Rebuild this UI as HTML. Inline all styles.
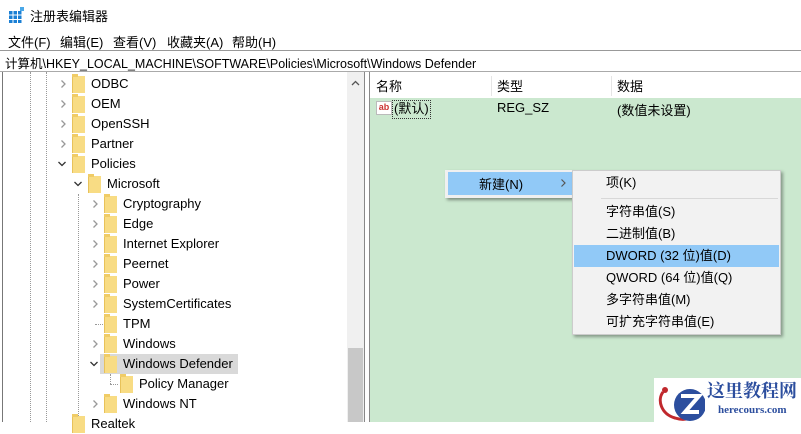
<!DOCTYPE html>
<html><head><meta charset="utf-8"><style>
*{margin:0;padding:0;box-sizing:border-box}
body{width:801px;height:422px;overflow:hidden;background:#fff;font-family:"Liberation Sans","Noto Sans CJK SC",sans-serif;font-size:13px;color:#000;position:relative}
.abs{position:absolute}
.row{position:absolute;height:20px;line-height:20px;white-space:nowrap}
.fold{position:absolute;width:13px;height:17px;background:#f8dc84;border-left:1px solid #e8c25a;top:2px}
.fold:before{content:"";position:absolute;left:-1px;top:-2px;width:6px;height:3px;background:#f0cc66}
.chev{position:absolute;top:6px}
.vd{position:absolute;width:0;border-left:1px dotted #999}
.hd{position:absolute;height:0;border-top:1px dotted #999}
.mi{position:absolute;left:0;width:208px;height:22px;line-height:22px;padding-left:33px}
</style></head><body>
<svg width="0" height="0" style="position:absolute"><defs>
<symbol id="r" viewBox="0 0 8 8"><polyline points="2.5,0.5 6,4 2.5,7.5" fill="none" stroke="#999" stroke-width="1.3"/></symbol>
<symbol id="d" viewBox="0 0 8 8"><polyline points="0.5,2 4,5.5 7.5,2" fill="none" stroke="#333" stroke-width="1.3"/></symbol>
</defs></svg>
<svg class="abs" style="left:9px;top:7px" width="16" height="16"><g fill="#1a7fd4"><rect x="0" y="4" width="3.5" height="3.5"/><rect x="4.5" y="4" width="3.5" height="3.5"/><rect x="9" y="4" width="3.5" height="3.5"/><rect x="0" y="8.5" width="3.5" height="3.5"/><rect x="4.5" y="8.5" width="3.5" height="3.5"/><rect x="9" y="8.5" width="3.5" height="3.5"/><rect x="0" y="13" width="3.5" height="3"/><rect x="4.5" y="13" width="3.5" height="3"/><rect x="9" y="13" width="3.5" height="3"/></g><rect x="11" y="0" width="4" height="4" fill="#4aa8e8"/></svg>
<div class="abs" style="left:30px;top:6px;font-size:13px">注册表编辑器</div>
<div class="abs" style="left:8px;top:32px">文件(F)</div>
<div class="abs" style="left:60px;top:32px">编辑(E)</div>
<div class="abs" style="left:113px;top:32px">查看(V)</div>
<div class="abs" style="left:167px;top:32px">收藏夹(A)</div>
<div class="abs" style="left:232px;top:32px">帮助(H)</div>
<div class="abs" style="left:0;top:50px;width:801px;height:22px;border-top:1px solid #999;border-bottom:1px solid #aaa;background:#fff"></div>
<div class="abs" style="left:5px;top:53px;font-size:12.5px">计算机\HKEY_LOCAL_MACHINE\SOFTWARE\Policies\Microsoft\Windows Defender</div>
<div class="abs" style="left:2px;top:72px;width:1px;height:350px;background:#777"></div>
<div class="vd" style="left:30px;top:72px;height:350px"></div>
<div class="vd" style="left:46px;top:72px;height:350px"></div>
<div class="vd" style="left:78px;top:194px;height:228px"></div>
<div class="vd" style="left:110px;top:374px;height:10px"></div>
<div class="hd" style="left:110px;top:384px;width:8px"></div>
<div class="hd" style="left:95px;top:324px;width:8px"></div>
<div class="abs" style="left:100px;top:354px;width:138px;height:20px;background:#d9d9d9"></div>
<div class="row" style="top:74px;left:0"><svg class="chev" style="left:59px" width="8" height="8"><use href="#r"/></svg><span class="fold" style="left:72px"></span><span class="abs" style="left:91px">ODBC</span></div>
<div class="row" style="top:94px;left:0"><svg class="chev" style="left:59px" width="8" height="8"><use href="#r"/></svg><span class="fold" style="left:72px"></span><span class="abs" style="left:91px">OEM</span></div>
<div class="row" style="top:114px;left:0"><svg class="chev" style="left:59px" width="8" height="8"><use href="#r"/></svg><span class="fold" style="left:72px"></span><span class="abs" style="left:91px">OpenSSH</span></div>
<div class="row" style="top:134px;left:0"><svg class="chev" style="left:59px" width="8" height="8"><use href="#r"/></svg><span class="fold" style="left:72px"></span><span class="abs" style="left:91px">Partner</span></div>
<div class="row" style="top:154px;left:0"><svg class="chev" style="left:58px" width="8" height="8"><use href="#d"/></svg><span class="fold" style="left:72px"></span><span class="abs" style="left:91px">Policies</span></div>
<div class="row" style="top:174px;left:0"><svg class="chev" style="left:74px" width="8" height="8"><use href="#d"/></svg><span class="fold" style="left:88px"></span><span class="abs" style="left:107px">Microsoft</span></div>
<div class="row" style="top:194px;left:0"><svg class="chev" style="left:91px" width="8" height="8"><use href="#r"/></svg><span class="fold" style="left:104px"></span><span class="abs" style="left:123px">Cryptography</span></div>
<div class="row" style="top:214px;left:0"><svg class="chev" style="left:91px" width="8" height="8"><use href="#r"/></svg><span class="fold" style="left:104px"></span><span class="abs" style="left:123px">Edge</span></div>
<div class="row" style="top:234px;left:0"><svg class="chev" style="left:91px" width="8" height="8"><use href="#r"/></svg><span class="fold" style="left:104px"></span><span class="abs" style="left:123px">Internet Explorer</span></div>
<div class="row" style="top:254px;left:0"><svg class="chev" style="left:91px" width="8" height="8"><use href="#r"/></svg><span class="fold" style="left:104px"></span><span class="abs" style="left:123px">Peernet</span></div>
<div class="row" style="top:274px;left:0"><svg class="chev" style="left:91px" width="8" height="8"><use href="#r"/></svg><span class="fold" style="left:104px"></span><span class="abs" style="left:123px">Power</span></div>
<div class="row" style="top:294px;left:0"><svg class="chev" style="left:91px" width="8" height="8"><use href="#r"/></svg><span class="fold" style="left:104px"></span><span class="abs" style="left:123px">SystemCertificates</span></div>
<div class="row" style="top:314px;left:0"><span class="fold" style="left:104px"></span><span class="abs" style="left:123px">TPM</span></div>
<div class="row" style="top:334px;left:0"><svg class="chev" style="left:91px" width="8" height="8"><use href="#r"/></svg><span class="fold" style="left:104px"></span><span class="abs" style="left:123px">Windows</span></div>
<div class="row" style="top:354px;left:0"><svg class="chev" style="left:90px" width="8" height="8"><use href="#d"/></svg><span class="fold" style="left:104px"></span><span class="abs" style="left:123px">Windows Defender</span></div>
<div class="row" style="top:374px;left:0"><span class="fold" style="left:120px"></span><span class="abs" style="left:139px">Policy Manager</span></div>
<div class="row" style="top:394px;left:0"><svg class="chev" style="left:91px" width="8" height="8"><use href="#r"/></svg><span class="fold" style="left:104px"></span><span class="abs" style="left:123px">Windows NT</span></div>
<div class="row" style="top:414px;left:0"><span class="fold" style="left:72px"></span><span class="abs" style="left:91px">Realtek</span></div>
<div class="abs" style="left:347px;top:72px;width:17px;height:350px;background:#f0f0f0"></div>
<div class="abs" style="left:348px;top:348px;width:15px;height:74px;background:#c8c8c8"></div>
<svg class="abs" style="left:351px;top:80px" width="9" height="6"><polyline points="1,5 4.5,1.5 8,5" fill="none" stroke="#555" stroke-width="1.3"/></svg>
<div class="abs" style="left:364px;top:72px;width:1px;height:350px;background:#888"></div>
<div class="abs" style="left:369px;top:72px;width:1px;height:350px;background:#888"></div>
<div class="abs" style="left:370px;top:98px;width:431px;height:324px;background:#cbe8cf"></div>
<div class="abs" style="left:376px;top:76px">名称</div>
<div class="abs" style="left:491px;top:76px;width:1px;height:20px;background:#e5e5e5"></div>
<div class="abs" style="left:497px;top:76px">类型</div>
<div class="abs" style="left:611px;top:76px;width:1px;height:20px;background:#e5e5e5"></div>
<div class="abs" style="left:617px;top:76px">数据</div>
<div class="abs" style="left:376px;top:101px;width:16px;height:14px;background:#fff;border:1px solid #bbb;font-size:9px;color:#c33;font-weight:bold;line-height:11px;text-align:center">ab</div>
<div class="abs" style="left:392px;top:100px;border:1px dotted #333;padding:0 1px;height:19px;line-height:16px">(默认)</div>
<div class="abs" style="left:497px;top:100px">REG_SZ</div>
<div class="abs" style="left:617px;top:100px">(数值未设置)</div>
<div class="abs" style="left:445px;top:170px;width:127px;height:28px;background:#f0f0f0;box-shadow:2px 2px 3px rgba(0,0,0,.4)"></div>
<div class="abs" style="left:448px;top:172px;width:124px;height:23px;background:#91c9f7"></div>
<div class="abs" style="left:479px;top:174px">新建(N)</div>
<svg class="abs" style="left:559px;top:179px" width="8" height="8"><polyline points="2.5,0.5 6,4 2.5,7.5" fill="none" stroke="#555" stroke-width="1.2"/></svg>
<div class="abs" style="left:572px;top:170px;width:209px;height:165px;background:#f2f2f2;border:1px solid #ccc;box-shadow:2px 2px 3px rgba(0,0,0,.35)">
<div class="mi" style="top:1px">项(K)</div>
<div class="abs" style="left:28px;top:27px;width:177px;height:1px;background:#d8d8d8"></div>
<div class="mi" style="top:30px">字符串值(S)</div>
<div class="mi" style="top:52px">二进制值(B)</div>
<div class="mi" style="top:74px;background:#91c9f7;left:1px;width:205px;padding-left:32px">DWORD (32 位)值(D)</div>
<div class="mi" style="top:96px">QWORD (64 位)值(Q)</div>
<div class="mi" style="top:118px">多字符串值(M)</div>
<div class="mi" style="top:140px">可扩充字符串值(E)</div>
</div>
<div class="abs" style="left:654px;top:378px;width:147px;height:44px;background:#fff"></div>
<svg class="abs" style="left:655px;top:380px" width="50" height="42"><path d="M8 12 C2 20 6 34 20 38 C32 42 44 36 48 28" stroke="#c0282d" stroke-width="3" fill="none"/><circle cx="35" cy="25" r="16" fill="#2c4e9e"/><path d="M26 16 H44 L30 32 H44" stroke="#fff" stroke-width="4" fill="none"/><circle cx="10" cy="10" r="3" fill="#c0282d"/></svg>
<div class="abs" style="left:707px;top:380px;font-family:'Noto Serif CJK SC',serif;font-weight:bold;font-size:18px;color:#2c4e9e;line-height:20px">这里教程网</div>
<div class="abs" style="left:718px;top:404px;font-family:'Liberation Serif',serif;font-weight:bold;font-size:11px;color:#2c4e9e">herecours.com</div>
</body></html>
